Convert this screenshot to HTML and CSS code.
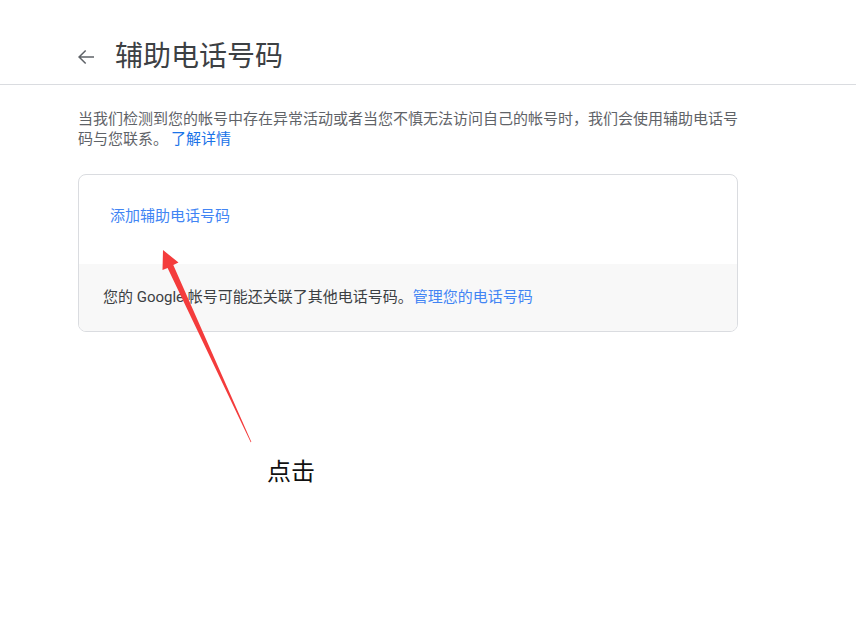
FILE: index.html
```html
<!DOCTYPE html>
<html lang="zh-CN">
<head>
    <meta charset="UTF-8">
    <title>辅助电话号码</title>
    <link rel="stylesheet" href="styles.css">
</head>
<body>
    <header class="header">
        <a class="back" href="#">
            <svg viewBox="0 0 24 24" width="24" height="24"><path d="M20 11.25H6.9l5.3-5.3-1.06-1.06L4 12l7.14 7.11 1.06-1.06-5.3-5.3H20z" fill="#5f6368"/></svg>
        </a>
        <h1>辅助电话号码</h1>
    </header>

    <main class="content">
        <p class="desc">当我们检测到您的帐号中存在异常活动或者当您不慎无法访问自己的帐号时，我们会使用辅助电话号码与您联系。<a href="#" class="link-dark">了解详情</a></p>

        <div class="card">
            <div class="card-top">
                <a href="#" class="link">添加辅助电话号码</a>
            </div>
            <div class="card-foot">
                您的 Google 帐号可能还关联了其他电话号码。<a href="#" class="link">管理您的电话号码</a>
            </div>
        </div>
    </main>

    <!-- annotation drawn over the screenshot -->
    <svg class="note-arrow" width="856" height="625" viewBox="0 0 856 625">
        <polygon points="163,250 178.5,262.6 173.3,264.9 251.4,442 250.7,442.3 167.6,267.9 162.5,270" fill="#f43c3c"/>
    </svg>
    <div class="note-text">点击</div>
</body>
</html>
```

FILE: styles.css
```css
body {
    margin: 0;
    font-family: Roboto, "Noto Sans CJK SC", sans-serif;
    background: #fff;
    color: #202124;
    position: relative;
    width: 856px;
    height: 625px;
    overflow: hidden;
}
.header {
    display: flex;
    align-items: center;
    height: 85px;
    padding: 39px 0 10px 74px;
    border-bottom: 1px solid #dadce0;
    box-sizing: border-box;
}
.back {
    display: flex;
    width: 24px;
    height: 24px;
    margin-right: 17px;
}
.header h1 {
    margin: 0;
    font-size: 28px;
    font-weight: 400;
    line-height: 36px;
    color: #3c4043;
}
.content {
    width: 660px;
    margin-left: 78px;
    padding-top: 24px;
}
.desc {
    margin: 0;
    font-size: 15px;
    line-height: 20px;
    color: #5f6368;
}
.link-dark {
    color: #1a73e8;
    text-decoration: none;
    margin-left: 3px;
}
.link {
    color: #4285f4;
    text-decoration: none;
}
.card {
    margin-top: 25px;
    border: 1px solid #dadce0;
    border-radius: 8px;
    overflow: hidden;
}
.card-top {
    padding: 31px 31px 38px;
    font-size: 15px;
    line-height: 20px;
}
.card-foot {
    background: #f8f8f8;
    padding: 23px 24px 24px;
    font-size: 15px;
    line-height: 20px;
    color: #3c4043;
}
.note-arrow {
    position: absolute;
    left: 0;
    top: 0;
    pointer-events: none;
}
.note-text {
    position: absolute;
    left: 267px;
    top: 458px;
    font-size: 24px;
    line-height: 28px;
    color: #111;
}
```
